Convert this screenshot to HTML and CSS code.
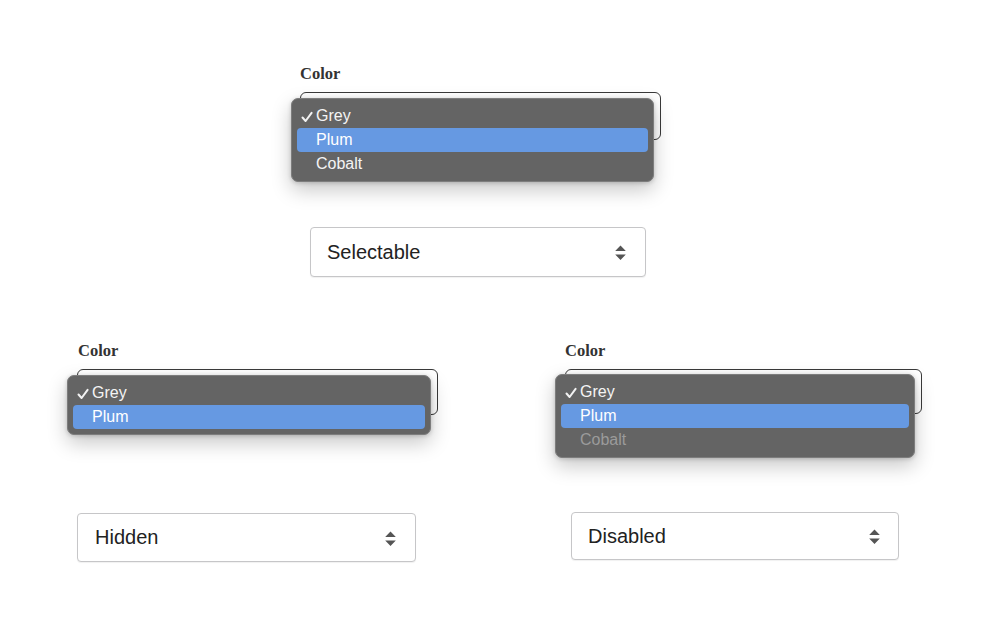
FILE: index.html
```html
<!DOCTYPE html>
<html lang="en">
<head>
<meta charset="utf-8">
<title>Select states</title>
<link rel="stylesheet" href="styles.css">
</head>
<body>
<main class="page">
  <section class="row-top">
    <div class="demo demo-top">
      <div class="label">Color</div>
      <div class="field field-top">
        <div class="box"></div>
        <ul class="menu menu-top">
          <li class="item checked"><svg class="check" viewBox="0 0 12 12" width="12" height="12"><path d="M1.5 6.5 L4.6 10 L10.6 1.8" fill="none" stroke="#f2f2f2" stroke-width="2" stroke-linecap="round" stroke-linejoin="round"/></svg>Grey</li>
          <li class="item active">Plum</li>
          <li class="item">Cobalt</li>
        </ul>
      </div>
      <div class="select select-top">
        <span class="select-text">Selectable</span>
        <svg class="arrows" viewBox="0 0 12 16" width="13" height="17"><path d="M1 6.5 L6 1.3 L11 6.5 Z M1 9.8 L6 15 L11 9.8 Z" fill="#555"/></svg>
      </div>
    </div>
  </section>
  <section class="row-bottom">
    <div class="demo demo-left">
      <div class="label">Color</div>
      <div class="field field-left">
        <div class="box"></div>
        <ul class="menu menu-left">
          <li class="item checked"><svg class="check" viewBox="0 0 12 12" width="12" height="12"><path d="M1.5 6.5 L4.6 10 L10.6 1.8" fill="none" stroke="#f2f2f2" stroke-width="2" stroke-linecap="round" stroke-linejoin="round"/></svg>Grey</li>
          <li class="item active">Plum</li>
        </ul>
      </div>
      <div class="select select-left">
        <span class="select-text">Hidden</span>
        <svg class="arrows" viewBox="0 0 12 16" width="13" height="17"><path d="M1 6.5 L6 1.3 L11 6.5 Z M1 9.8 L6 15 L11 9.8 Z" fill="#555"/></svg>
      </div>
    </div>
    <div class="demo demo-right">
      <div class="label">Color</div>
      <div class="field field-right">
        <div class="box"></div>
        <ul class="menu menu-right">
          <li class="item checked"><svg class="check" viewBox="0 0 12 12" width="12" height="12"><path d="M1.5 6.5 L4.6 10 L10.6 1.8" fill="none" stroke="#f2f2f2" stroke-width="2" stroke-linecap="round" stroke-linejoin="round"/></svg>Grey</li>
          <li class="item active">Plum</li>
          <li class="item disabled">Cobalt</li>
        </ul>
      </div>
      <div class="select select-right">
        <span class="select-text">Disabled</span>
        <svg class="arrows" viewBox="0 0 12 16" width="13" height="17"><path d="M1 6.5 L6 1.3 L11 6.5 Z M1 9.8 L6 15 L11 9.8 Z" fill="#555"/></svg>
      </div>
    </div>
  </section>
</main>
</body>
</html>
```

FILE: styles.css
```css
* { box-sizing: border-box; }

html, body {
  margin: 0;
  padding: 0;
  background: #ffffff;
}

.page {
  width: 1000px;
  height: 635px;
  overflow: hidden;
  font-family: "Liberation Sans", Arial, sans-serif;
  color: #222;
}

.row-top {
  padding-top: 64px;
  padding-left: 300px;
}

.row-bottom {
  display: flex;
  margin-top: 64px;
  padding-left: 77px;
}

.demo {
  display: flex;
  flex-direction: column;
}

.demo-top { width: 361px; }
.demo-left { width: 361px; }
.demo-right { width: 357px; margin-left: 127px; }

.label {
  font-family: "Liberation Serif", "Times New Roman", serif;
  font-weight: bold;
  font-size: 16.5px;
  line-height: 20px;
  color: #333;
  margin-bottom: 8px;
}

.demo-left .label { padding-left: 1px; }

.field {
  position: relative;
}

.box {
  border: 1px solid #3a3a3a;
  border-radius: 6px;
  background: #fff;
}

.field-top .box { height: 48px; }
.field-left .box { height: 46px; }
.field-right .box { height: 45px; }

.menu {
  position: absolute;
  margin: 0;
  padding: 5px;
  list-style: none;
  background: #646464;
  border: 1px solid #7d7d7d;
  border-radius: 7px;
  box-shadow: 0 8px 20px rgba(0, 0, 0, 0.22), 0 1px 4px rgba(0, 0, 0, 0.18);
}

.menu-top { left: -9px; top: 6px; width: 363px; }
.menu-left { left: -10px; top: 6px; width: 364px; }
.menu-right { left: -10px; top: 5px; width: 360px; }

.item {
  position: relative;
  height: 24px;
  line-height: 24px;
  padding-left: 19px;
  font-size: 16px;
  color: #f4f4f4;
  border-radius: 4px;
}

.item.active {
  background: #6699e2;
  color: #ffffff;
}

.item.disabled {
  color: #9b9b9b;
}

.check {
  position: absolute;
  left: 4px;
  top: 7px;
}

.select {
  display: flex;
  align-items: center;
  justify-content: space-between;
  border: 1px solid #c6c6c8;
  border-radius: 4px;
  background: #fff;
  padding: 0 18px 0 16px;
  font-size: 20px;
  color: #222;
  box-shadow: 0 1px 1px rgba(0, 0, 0, 0.06);
}

.select-top {
  margin-top: 87px;
  margin-left: 10px;
  width: 336px;
  height: 50px;
}

.select-left {
  margin-top: 98px;
  width: 339px;
  height: 49px;
  padding-left: 17px;
}

.select-right {
  margin-top: 98px;
  margin-left: 6px;
  width: 328px;
  height: 48px;
  padding-right: 17px;
}

.arrows {
  display: block;
  margin-top: 1px;
}
```
